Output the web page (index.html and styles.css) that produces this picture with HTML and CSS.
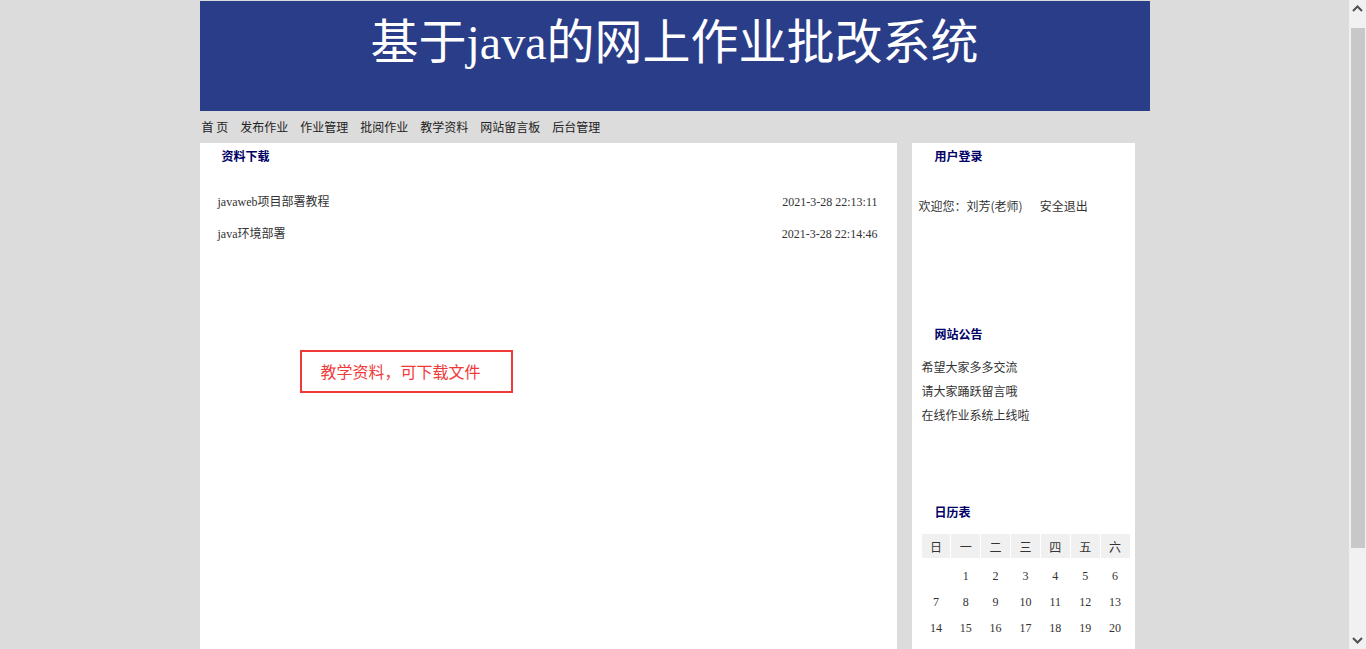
FILE: index.html
```html
<!DOCTYPE html>
<html lang="zh-CN">
<head>
    <meta charset="UTF-8">
    <title>基于java的网上作业批改系统</title>
    <link rel="stylesheet" href="styles.css">
</head>
<body>
    <div class="wrap">
        <div class="header">
            <h1>基于java的网上作业批改系统</h1>
        </div>
        <div class="nav">
            <a href="#">首 页</a>
            <a href="#">发布作业</a>
            <a href="#">作业管理</a>
            <a href="#">批阅作业</a>
            <a href="#">教学资料</a>
            <a href="#">网站留言板</a>
            <a href="#">后台管理</a>
        </div>
        <div class="main">
            <div class="left">
                <div class="box-title">资料下载</div>
                <ul class="file-list">
                    <li><a href="#">javaweb项目部署教程</a><span>2021-3-28 22:13:11</span></li>
                    <li><a href="#">java环境部署</a><span>2021-3-28 22:14:46</span></li>
                </ul>
                <div class="tip">教学资料，可下载文件</div>
            </div>
            <div class="right">
                <div class="box login">
                    <div class="box-title">用户登录</div>
                    <p class="welcome">欢迎您：刘芳(老师)<a href="#">安全退出</a></p>
                </div>
                <div class="box notice">
                    <div class="box-title">网站公告</div>
                    <ul class="notice-list">
                        <li>希望大家多多交流</li>
                        <li>请大家踊跃留言哦</li>
                        <li>在线作业系统上线啦</li>
                    </ul>
                </div>
                <div class="box calendar">
                    <div class="box-title">日历表</div>
                    <table class="cal">
                        <thead>
                            <tr><th>日</th><th>一</th><th>二</th><th>三</th><th>四</th><th>五</th><th>六</th></tr>
                        </thead>
                        <tbody>
                            <tr><td></td><td>1</td><td>2</td><td>3</td><td>4</td><td>5</td><td>6</td></tr>
                            <tr><td>7</td><td>8</td><td>9</td><td>10</td><td>11</td><td>12</td><td>13</td></tr>
                            <tr><td>14</td><td>15</td><td>16</td><td>17</td><td>18</td><td>19</td><td>20</td></tr>
                            <tr><td>21</td><td>22</td><td>23</td><td>24</td><td>25</td><td>26</td><td>27</td></tr>
                            <tr><td>28</td><td>29</td><td>30</td><td>31</td><td></td><td></td><td></td></tr>
                        </tbody>
                    </table>
                </div>
            </div>
        </div>
    </div>

    <!-- window scrollbar, as in the screenshot -->
    <div class="scrollbar">
        <svg class="arrow-up" width="17" height="17" viewBox="0 0 17 17">
            <path d="M4 11 L8.5 6.5 L13 11" fill="none" stroke="#505050" stroke-width="2"/>
        </svg>
        <div class="thumb"></div>
        <svg class="arrow-down" width="17" height="17" viewBox="0 0 17 17">
            <path d="M4 6 L8.5 10.5 L13 6" fill="none" stroke="#505050" stroke-width="2"/>
        </svg>
    </div>
</body>
</html>
```

FILE: styles.css
```css
/* Global */
body {
    margin: 0;
    padding: 0 17px 0 0;
    background: #dcdcdc;
    font-family: 'Liberation Serif', 'Noto Sans CJK SC', serif;
    font-size: 12px;
    color: #333;
}

a {
    color: #333;
    text-decoration: none;
}

ul {
    margin: 0;
    padding: 0;
    list-style: none;
}

.wrap {
    width: 950px;
    margin: 1px auto 0;
}

/* Header */
.header {
    height: 110px;
    background: #2a3d89;
    text-align: center;
}

.header h1 {
    margin: 0;
    padding-top: 17px;
    font-size: 48px;
    line-height: 50px;
    font-weight: normal;
    color: #fff;
}

/* Navigation */
.nav {
    height: 32px;
    line-height: 32px;
    padding-left: 2px;
    font-family: 'Noto Sans CJK SC', sans-serif;
    font-size: 12px;
    display: flex;
    gap: 12px;
}

.nav a {
    color: #222;
}

/* Main */
.main {
    display: flex;
    gap: 15px;
}

.left {
    width: 697px;
    min-height: 620px;
    background: #fff;
}

.right {
    width: 223px;
    background: #fff;
}

.box-title {
    height: 26px;
    line-height: 26px;
    padding-left: 22px;
    font-family: 'Noto Sans CJK SC', sans-serif;
    font-weight: bold;
    color: #000066;
}

.file-list {
    margin-top: 17px;
    padding: 0 19px 0 18px;
}

.file-list li {
    height: 32px;
    line-height: 32px;
    display: flex;
    justify-content: space-between;
}

.tip {
    width: 190px;
    height: 39px;
    margin: 100px 0 0 100px;
    padding-left: 19px;
    border: 2px solid #f03a3a;
    line-height: 39px;
    font-family: 'Noto Sans CJK SC', sans-serif;
    font-size: 16px;
    color: #f03a3a;
}

/* Right column */
.right .box-title {
    padding-left: 23px;
}

.login {
    height: 178px;
}

.welcome {
    margin: 27px 0 0 7px;
    line-height: 20px;
    font-family: 'Noto Sans CJK SC', sans-serif;
}

.welcome a {
    margin-left: 17px;
}

.notice {
    height: 178px;
}

.notice-list {
    margin-top: 8px;
    padding-left: 10px;
    font-family: 'Noto Sans CJK SC', sans-serif;
}

.notice-list li {
    line-height: 24px;
}

.cal {
    margin: 9px 0 0 9px;
    width: 210px;
    border-collapse: separate;
    border-spacing: 1px 0;
    text-align: center;
}

.cal th {
    height: 24px;
    padding: 0;
    background: #f0f0f0;
    font-family: 'Noto Sans CJK SC', sans-serif;
    font-weight: normal;
    color: #333;
}

.cal td {
    height: 26px;
    padding: 0;
}

.cal tbody tr:first-child td {
    padding-top: 5px;
}

/* Fake window scrollbar */
.scrollbar {
    position: fixed;
    top: 0;
    right: 0;
    width: 17px;
    height: 100%;
    background: #f1f1f1;
    display: flex;
    flex-direction: column;
}

.scrollbar .thumb {
    height: 520px;
    margin: 11px 1px 0 2px;
    background: #c8c8c8;
}

.scrollbar .arrow-down {
    margin-top: auto;
}
```
